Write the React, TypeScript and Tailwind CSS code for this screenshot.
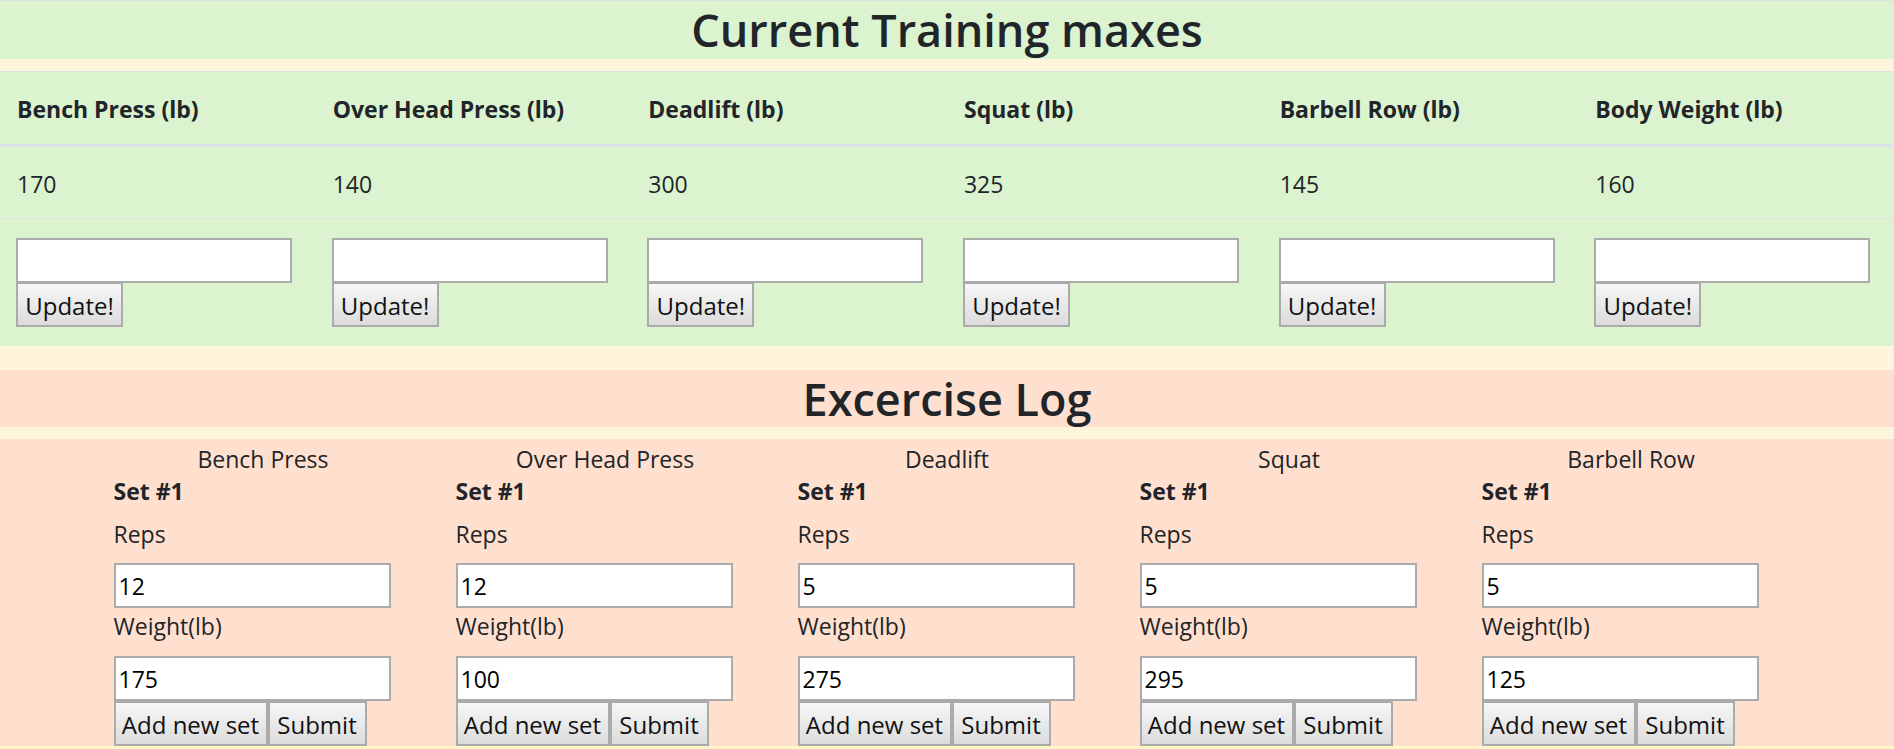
import React from "react";

const maxes = [
  { label: "Bench Press (lb)", value: 170 },
  { label: "Over Head Press (lb)", value: 140 },
  { label: "Deadlift (lb)", value: 300 },
  { label: "Squat (lb)", value: 325 },
  { label: "Barbell Row (lb)", value: 145 },
  { label: "Body Weight (lb)", value: 160 },
];

const logs = [
  { name: "Bench Press", reps: "12", weight: "175" },
  { name: "Over Head Press", reps: "12", weight: "100" },
  { name: "Deadlift", reps: "5", weight: "275" },
  { name: "Squat", reps: "5", weight: "295" },
  { name: "Barbell Row", reps: "5", weight: "125" },
];

const btn =
  "h-[45px] border-2 border-[#ababab] bg-gradient-to-b from-[#f7f7f7] to-[#dcdcdc] pt-[2px] text-[24px] leading-[36px] text-[#111]";
const field =
  "block h-[45px] w-[277px] border-2 border-[#ababab] bg-white px-[3px] text-[23px] text-black outline-none";

export default function App() {
  return (
    <div className="min-h-screen border-t border-[#dee2e6] bg-[#fff5dc] font-['Open_Sans','Noto_Sans',sans-serif] text-[#212529]">
      <h2 className="mb-[12px] h-[58px] bg-[#dbf3cf] text-center text-[45px] font-semibold leading-[58px]">
        Current Training maxes
      </h2>

      <table className="mb-[24px] w-full table-fixed border-collapse border-t border-[#dee2e6] bg-[#dbf3cf] text-left text-[23px]">
        <thead>
          <tr className="border-b-[3px] border-[#dee2e6]">
            {maxes.map((m) => (
              <th key={m.label} className="px-[17px] pt-[19px] pb-[17px] leading-[36px] font-bold">
                {m.label}
              </th>
            ))}
          </tr>
        </thead>
        <tbody>
          <tr className="border-b border-[#dee2e6]">
            {maxes.map((m) => (
              <td key={m.label} className="px-[17px] pt-[19px] pb-[16px] leading-[36px]">
                {m.value}
              </td>
            ))}
          </tr>
          <tr>
            {maxes.map((m) => (
              <td key={m.label} className="px-[16px] pt-[19px] pb-[19px] align-top">
                <input type="text" className={field + " !w-[276px]"} />
                <button className={btn + " block w-[107px] -mt-[1px]"}>Update!</button>
              </td>
            ))}
          </tr>
        </tbody>
      </table>

      <h2 className="mb-[12px] h-[57px] bg-[#ffe0cf] text-center text-[45px] font-semibold leading-[57px]">
        Excercise Log
      </h2>

      <div className="bg-[#ffe0cf] pt-[2px]">
        <div className="mx-auto grid w-[1710px] grid-cols-5">
          {logs.map((l) => (
            <div key={l.name} className="px-[21.5px]">
              <div className="h-[32px] text-center text-[23px] leading-[36px]">{l.name}</div>
              <div className="h-[36px] text-[23px] font-bold leading-[36px]">Set #1</div>
              <div className="mt-[7px] mb-[11px] text-[23px] leading-[36px]">Reps</div>
              <input type="text" defaultValue={l.reps} className={field} />
              <div className="mb-[12px] text-[23px] leading-[36px]">Weight(lb)</div>
              <input type="text" defaultValue={l.weight} className={field} />
              <div className="flex">
                <button className={btn + " w-[154px]"}>Add new set</button>
                <button className={btn + " w-[99px]"}>Submit</button>
              </div>
            </div>
          ))}
        </div>
      </div>
      <div className="h-[4px] bg-[#fff6c8]" />
    </div>
  );
}
